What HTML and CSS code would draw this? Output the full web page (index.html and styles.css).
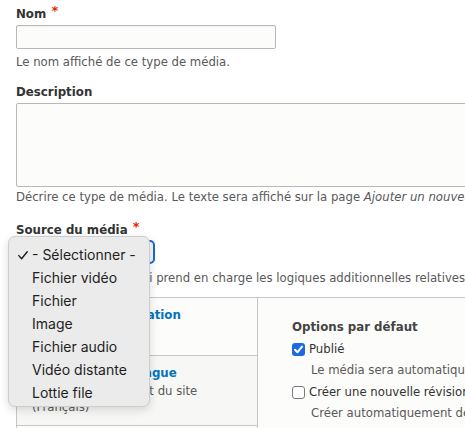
FILE: index.html
```html
<!DOCTYPE html>
<html lang="fr">
<head>
<meta charset="utf-8">
<title>Type de média</title>
<link rel="stylesheet" href="styles.css">
</head>
<body>
<div class="page">
  <div class="form-item item-name">
    <label class="label">Nom <span class="req">*</span></label>
    <div class="input"></div>
    <div class="desc">Le nom affiché de ce type de média.</div>
  </div>

  <div class="form-item item-description">
    <label class="label">Description</label>
    <div class="textarea"></div>
    <div class="desc">Décrire ce type de média. Le texte sera affiché sur la page <em>Ajouter un nouveau média</em>.</div>
  </div>

  <div class="form-item item-source">
    <label class="label">Source du média <span class="req">*</span></label>
    <div class="select-wrap">
      <div class="select">- Sélectionner -</div>
      <ul class="popup">
        <li class="opt checked"><svg class="tick" width="10" height="9" viewBox="0 0 10 9"><polyline points="0.8,4.6 3.6,7.8 9.2,0.8" fill="none" stroke="#1e1e1e" stroke-width="1.4" stroke-linecap="round" stroke-linejoin="round"/></svg>- Sélectionner -</li>
        <li class="opt">Fichier vidéo</li>
        <li class="opt">Fichier</li>
        <li class="opt">Image</li>
        <li class="opt">Fichier audio</li>
        <li class="opt">Vidéo distante</li>
        <li class="opt">Lottie file</li>
      </ul>
    </div>
    <div class="desc">La source de média qui prend en charge les logiques additionnelles relatives à ce type de média.</div>
  </div>

  <div class="vtabs">
    <ul class="vtabs-menu">
      <li class="vtab is-selected">
        <a class="vtab-title">Options de publication</a>
        <span class="vtab-summary">Publié</span>
      </li>
      <li class="vtab">
        <a class="vtab-title">Paramètres de langue</a>
        <span class="vtab-summary">La langue par défaut du site<br>(Français)</span>
      </li>
    </ul>
    <div class="vtabs-pane">
      <div class="pane-title">Options par défaut</div>
      <div class="check-row"><span class="cb cb-on"><svg width="13" height="13" viewBox="0 0 13 13"><polyline points="3,6.8 5.4,9.3 10,3.6" fill="none" stroke="#fff" stroke-width="2" stroke-linecap="round" stroke-linejoin="round"/></svg></span><span class="check-label">Publié</span></div>
      <div class="desc pane-desc">Le média sera automatiquement publié lors de sa création.</div>
      <div class="check-row"><span class="cb"></span><span class="check-label">Créer une nouvelle révision</span></div>
      <div class="desc pane-desc">Créer automatiquement de nouvelles révisions.</div>
      <div class="check-row"><span class="cb"></span><span class="check-label">Mettre en file d'attente le téléchargement des vignettes</span></div>
    </div>
  </div>
</div>
</body>
</html>
```

FILE: styles.css
```css
html, body {
  margin: 0;
  padding: 0;
  overflow: hidden;
  background: #ffffff;
}

.page {
  width: 640px;
  padding: 6px 0 0 16px;
  font-family: "DejaVu Sans", sans-serif;
  color: #333333;
}

.form-item {
  display: flex;
  flex-direction: column;
  align-items: flex-start;
}

.label {
  display: block;
  font-weight: bold;
  font-size: 11.8px;
  line-height: 16px;
  color: #333333;
  margin-bottom: 3px;
}

.req {
  color: #e32700;
  font-size: 13px;
  line-height: 10px;
  vertical-align: 3px;
  margin-left: 1px;
}

.desc {
  font-size: 11.7px;
  line-height: 14px;
  color: #595959;
  white-space: nowrap;
}

.input {
  box-sizing: border-box;
  width: 260px;
  height: 24px;
  border: 1px solid #b8b8b8;
  border-radius: 2px;
  background: #fcfcfa;
  box-shadow: inset 0 1px 1px rgba(0,0,0,0.04);
}

.item-name .desc {
  margin-top: 6px;
}

.item-description {
  margin-top: 15px;
}

.textarea {
  box-sizing: border-box;
  width: 620px;
  height: 84px;
  border: 1px solid #b8b8b8;
  border-radius: 2px;
  background: #fcfcfa;
}

.item-description .desc {
  margin-top: 3px;
}

.item-source {
  margin-top: 18px;
}

.item-source .label {
  margin-bottom: 2px;
}

.select-wrap {
  position: relative;
}

.select {
  box-sizing: border-box;
  width: 139px;
  height: 24px;
  border: 2px solid #1b66df;
  border-radius: 5px;
  background: #f6f6f6;
  font-size: 12px;
  line-height: 20px;
  padding-left: 8px;
  color: #333;
}

.popup {
  position: absolute;
  left: -8px;
  top: -4px;
  width: 142px;
  box-sizing: border-box;
  margin: 0;
  padding: 6px 0 2px;
  list-style: none;
  background: #ebebeb;
  border: 1px solid #cdcdcd;
  border-radius: 7px;
  box-shadow: 0 3px 10px rgba(0,0,0,0.14);
  font-family: Inter, "Noto Sans", sans-serif;
  font-size: 14px;
  color: #1e1e1e;
  z-index: 5;
}

.opt {
  position: relative;
  height: 23px;
  line-height: 23px;
  padding-left: 23px;
  white-space: nowrap;
}

.tick {
  position: absolute;
  left: 9px;
  top: 8px;
}

.item-source .desc {
  margin-top: 7px;
}

.vtabs {
  margin-top: 12px;
  display: flex;
  border-top: 1px solid #c6c6c6;
  border-left: 1px solid #c6c6c6;
  width: 640px;
  height: 140px;
  background: #fcfcfa;
}

.vtabs-menu {
  margin: 0;
  padding: 0;
  list-style: none;
  width: 240px;
  flex: none;
  border-right: 1px solid #c6c6c6;
}

.vtab {
  display: flex;
  flex-direction: column;
  padding: 9px 12px 15px 13px;
  background: #f7f7f5;
  border-bottom: 1px solid #c6c6c6;
}

.vtab.is-selected {
  background: #fcfcfa;
  padding-bottom: 14px;
}

.vtab + .vtab {
  padding-bottom: 10px;
}

.vtab-title {
  font-weight: bold;
  font-size: 11.8px;
  line-height: 16px;
  color: #0074bd;
}

.vtab-summary {
  font-size: 11.7px;
  line-height: 16px;
  color: #595959;
  margin-top: 2px;
  padding-left: 2px;
}

.vtabs-pane {
  padding: 21px 0 0 34px;
  flex: 1;
}

.pane-title {
  font-weight: bold;
  font-size: 11.8px;
  line-height: 16px;
  color: #444444;
  margin-bottom: 6px;
}

.check-row {
  display: flex;
  align-items: center;
  height: 16px;
  white-space: nowrap;
}

.cb {
  box-sizing: border-box;
  width: 13px;
  height: 13px;
  border: 1px solid #7a7a7a;
  border-radius: 3px;
  background: #ffffff;
  margin-right: 4px;
  flex: none;
}

.cb-on {
  border: none;
  background: #1b6ae2;
}

.cb-on svg {
  display: block;
}

.check-label {
  font-size: 11.7px;
  line-height: 16px;
  color: #333333;
}

.pane-desc {
  padding-left: 19px;
  margin-top: 6px;
  margin-bottom: 7px;
}
```
